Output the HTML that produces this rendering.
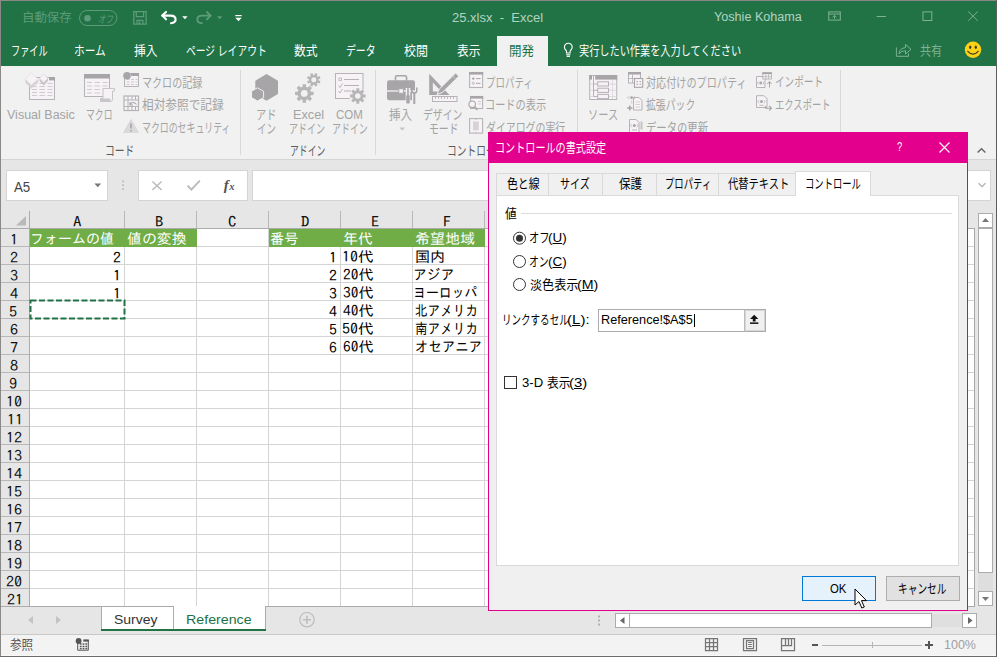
<!DOCTYPE html>
<html lang="ja"><head><meta charset="utf-8"><title>25.xlsx - Excel</title>
<style>
html,body{margin:0;padding:0}
body{width:997px;height:657px;overflow:hidden;background:#e6e6e6;position:relative;font-family:"Liberation Sans","Noto Sans CJK JP",sans-serif;}
.a{position:absolute;box-sizing:border-box}
.t{position:absolute;white-space:nowrap;line-height:20px;height:20px;display:block;transform-origin:0 50%}
svg{position:absolute;overflow:visible}
u{text-decoration:underline;text-underline-offset:1px}
</style></head><body>
<!-- window chrome -->
<div class="a" style="left:0;top:0;width:997px;height:657px;background:#8b8888"></div>
<div class="a" style="left:1px;top:1px;width:995px;height:65px;background:#217346"></div>
<div class="a" style="left:1px;top:66px;width:995px;height:93px;background:#f1f1f1"></div>
<div class="a" style="left:1px;top:159px;width:995px;height:1px;background:#d5d5d5"></div>
<div class="a" style="left:1px;top:160px;width:995px;height:474px;background:#e6e6e6"></div>
<div class="a" style="left:1px;top:634px;width:995px;height:1px;background:#c8c8c8"></div>
<div class="a" style="left:1px;top:635px;width:995px;height:20px;background:#f3f3f3"></div>
<div class="a" style="left:996px;top:0;width:1px;height:657px;background:#5c5c5c"></div>
<div class="a" style="left:1px;top:655px;width:995px;height:1px;background:#f8f8f8"></div>
<div class="a" style="left:0;top:656px;width:997px;height:1px;background:#6a6a6a"></div>
<!-- active ribbon tab -->
<div class="a" style="left:497px;top:36px;width:51px;height:30px;background:#f1f1f1"></div>
<svg style="left:0;top:0" width="997" height="165" viewBox="0 0 997 165">
<path d="M240.5 70V155" stroke="#d8d8d8" stroke-width="1"/>
<path d="M375.5 70V155" stroke="#d8d8d8" stroke-width="1"/>
<path d="M577.5 70V155" stroke="#d8d8d8" stroke-width="1"/>
<path d="M840.5 70V155" stroke="#d8d8d8" stroke-width="1"/>
<rect x="29.5" y="77.5" width="25" height="22" fill="#f6f2f6" stroke="#b5b3b5"/>
<rect x="49" y="77" width="6" height="3.4" fill="#a7a5a7"/>
<path d="M32 83.5H37M39.5 83.5H45M47.5 83.5H52.5" stroke="#cfcccf" stroke-width="1"/>
<path d="M32 86.5H37M39.5 86.5H45M47.5 86.5H52.5" stroke="#cfcccf" stroke-width="1"/>
<path d="M32 89.5H37M39.5 89.5H45M47.5 89.5H52.5" stroke="#cfcccf" stroke-width="1"/>
<path d="M32 92.5H37M39.5 92.5H45M47.5 92.5H52.5" stroke="#cfcccf" stroke-width="1"/>
<path d="M32 95.5H37M39.5 95.5H45M47.5 95.5H52.5" stroke="#cfcccf" stroke-width="1"/>
<path d="M25.2 79L31.3 84.9L38.2 79V82.6L31.3 88.8L25.2 82.6Z" fill="#d6d3d6"/>
<path d="M31.3 73.2L38.2 79L31.3 84.9L25.2 79Z" fill="#f6f2f6" stroke="#dedbde" stroke-width="0.6"/>
<path d="M39.5 78.2L43.7 82.4L47.9 78.2V81L43.7 85.5L39.5 81Z" fill="#c6c3c6"/>
<path d="M43.7 74L47.9 78.2L43.7 82.4L39.5 78.2Z" fill="#f6f2f6" stroke="#d2cfd2" stroke-width="0.6"/>
<rect x="84.5" y="74.5" width="25" height="22" fill="#f6f2f6" stroke="#b5b3b5"/>
<rect x="84" y="74" width="26" height="4.5" fill="#a7a5a7"/>
<path d="M87 82.5H92M94.5 82.5H100M102.5 82.5H107.5" stroke="#cfcccf" stroke-width="1"/>
<path d="M87 86H92M94.5 86H100M102.5 86H107.5" stroke="#cfcccf" stroke-width="1"/>
<path d="M87 89.5H92M94.5 89.5H100M102.5 89.5H107.5" stroke="#cfcccf" stroke-width="1"/>
<path d="M87 93H92M94.5 93H100M102.5 93H107.5" stroke="#cfcccf" stroke-width="1"/>
<path d="M103 88.5H114.5V91H112.5V99.5Q112.5 101.5 110.5 101.5H100.5V98.5H103Z" fill="#f6f2f6" stroke="#c2bfc2" stroke-width="0.9"/>
<path d="M100.5 98.5H110.5V101.5H100.5Z" fill="#c9c6c9"/>
<rect x="124.5" y="73.5" width="14" height="13" fill="#f6f2f6" stroke="#b5b3b5"/>
<rect x="131" y="73" width="8" height="3" fill="#a7a5a7"/>
<path d="M126.5 79.5H129.5M131 79.5H134M135.5 79.5H137.5" stroke="#cfcccf" stroke-width="1"/>
<path d="M126.5 82H129.5M131 82H134M135.5 82H137.5" stroke="#cfcccf" stroke-width="1"/>
<path d="M126.5 84.5H129.5M131 84.5H134M135.5 84.5H137.5" stroke="#cfcccf" stroke-width="1"/>
<circle cx="127" cy="75.8" r="3.8" fill="#a7a5a7"/>
<rect x="124" y="96" width="14.5" height="14.5" fill="#f6f2f6" stroke="#b5b3b5" stroke-width="1.2"/>
<path d="M128 96V110M124 100H138.5M124 106.5H138.5M132 96V100M135.5 96V100M132 106.5V110.5M135.5 106.5V110.5" stroke="#b5b3b5" stroke-width="1"/>
<path d="M130 104.5Q133 100.5 136.5 104.5M130 102V105H133" stroke="#a7a5a7" stroke-width="1.1" fill="none"/>
<path d="M131 119.5L138.5 132.5H123.5Z" fill="#dcd9dc" stroke="#d2cfd2" stroke-width="0.6"/>
<path d="M131 123.5V128.5M131 130V131.5" stroke="#a7a5a7" stroke-width="1.6"/>
<path d="M266.5 74L278 80.7V94L266.5 100.7L255.3 94V80.7Z" fill="#a7a5a7"/>
<path d="M257.5 87.8L263.6 91.3V97.6L257.5 101L251.5 97.6V91.3Z" fill="#a7a5a7" stroke="#f1f1f1" stroke-width="1"/>
<path d="M310.87 91.66 L313.55 91.71 L313.55 95.09 L310.87 95.14 L310.18 96.82 L312.03 98.74 L309.64 101.13 L307.72 99.28 L306.04 99.97 L305.99 102.65 L302.61 102.65 L302.56 99.97 L300.88 99.28 L298.96 101.13 L296.57 98.74 L298.42 96.82 L297.73 95.14 L295.05 95.09 L295.05 91.71 L297.73 91.66 L298.42 89.98 L296.57 88.06 L298.96 85.67 L300.88 87.52 L302.56 86.83 L302.61 84.15 L305.99 84.15 L306.04 86.83 L307.72 87.52 L309.64 85.67 L312.03 88.06 L310.18 89.98Z M307.70 93.40 A3.4 3.4 0 1 0 300.90 93.40 A3.4 3.4 0 1 0 307.70 93.40Z" fill="#b7b5b7" fill-rule="evenodd"/>
<path d="M318.66 80.44 L320.55 81.23 L319.61 83.53 L317.70 82.76 L316.78 83.69 L317.56 85.59 L315.27 86.54 L314.47 84.65 L313.16 84.66 L312.37 86.55 L310.07 85.61 L310.84 83.70 L309.91 82.78 L308.01 83.56 L307.06 81.27 L308.95 80.47 L308.94 79.16 L307.05 78.37 L307.99 76.07 L309.90 76.84 L310.82 75.91 L310.04 74.01 L312.33 73.06 L313.13 74.95 L314.44 74.94 L315.23 73.05 L317.53 73.99 L316.76 75.90 L317.69 76.82 L319.59 76.04 L320.54 78.33 L318.65 79.13Z M316.30 79.80 A2.5 2.5 0 1 0 311.30 79.80 A2.5 2.5 0 1 0 316.30 79.80Z" fill="#b7b5b7" fill-rule="evenodd"/>
<rect x="335.5" y="73.5" width="27.5" height="25" fill="#f6f2f6" stroke="#b5b3b5"/>
<rect x="339" y="78" width="2.5" height="2.5" fill="none" stroke="#b5b3b5" stroke-width="0.8"/>
<path d="M344 79.5H359M344 85.5H359M344 91H351" stroke="#b5b3b5" stroke-width="1"/>
<path d="M338.5 85.5L340 87.5L342.5 83.5M338.5 91L340 93L342.5 89" stroke="#b5b3b5" stroke-width="0.9" fill="none"/>
<circle cx="357.8" cy="96" r="8.6" fill="#f1f1f1"/>
<path d="M363.21 94.56 L365.57 94.58 L365.57 97.42 L363.21 97.44 L362.64 98.81 L364.30 100.49 L362.29 102.50 L360.61 100.84 L359.24 101.41 L359.22 103.77 L356.38 103.77 L356.36 101.41 L354.99 100.84 L353.31 102.50 L351.30 100.49 L352.96 98.81 L352.39 97.44 L350.03 97.42 L350.03 94.58 L352.39 94.56 L352.96 93.19 L351.30 91.51 L353.31 89.50 L354.99 91.16 L356.36 90.59 L356.38 88.23 L359.22 88.23 L359.24 90.59 L360.61 91.16 L362.29 89.50 L364.30 91.51 L362.64 93.19Z M360.60 96.00 A2.8 2.8 0 1 0 355.00 96.00 A2.8 2.8 0 1 0 360.60 96.00Z" fill="#b7b5b7" fill-rule="evenodd"/>
<path d="M395.5 80.5V77Q395.5 75.7 397 75.7H405Q406.5 75.7 406.5 77V80.5" fill="none" stroke="#a7a5a7" stroke-width="1.6"/>
<rect x="387" y="80.3" width="28" height="20" rx="2.2" fill="#a7a5a7"/>
<path d="M387 91H415" stroke="#f6f2f6" stroke-width="1.3"/>
<rect x="398.8" y="88.8" width="4.6" height="4.4" fill="#f6f2f6" stroke="#a7a5a7" stroke-width="0.8"/>
<path d="M408 88V103.5M414.3 91V104" stroke="#f1f1f1" stroke-width="4.6"/>
<path d="M408 88.3V96" stroke="#a7a5a7" stroke-width="1.6"/><rect x="406.3" y="95" width="3.4" height="8.6" rx="1.2" fill="#a7a5a7"/>
<path d="M414.3 92V104" stroke="#a7a5a7" stroke-width="2"/><path d="M411.8 87.5V90.5Q411.8 93 414.3 93Q416.8 93 416.8 90.5V87.5" stroke="#a7a5a7" stroke-width="1.5" fill="none"/>
<path d="M429.2 73.8V95H449.5ZM432.8 82.5V91.4H441.3Z" fill="#a7a5a7" fill-rule="evenodd"/>
<path d="M455.6 73L458.8 76.2L442.4 92.4L437 94.6L439.2 89.2Z" fill="#a7a5a7" stroke="#f1f1f1" stroke-width="1"/>
<path d="M452.6 76L455.8 79.2" stroke="#c9c7c9" stroke-width="1"/>
<rect x="432.5" y="96.5" width="24.5" height="5" fill="#f6f2f6" stroke="#b5b3b5"/>
<path d="M435.5 97V99M438.5 97V99M441.5 97V99M444.5 97V99M447.5 97V99M450.5 97V99M453.5 97V99" stroke="#b5b3b5" stroke-width="0.9"/>
<rect x="469.6" y="72.5" width="13" height="15" fill="#f6f2f6" stroke="#b5b3b5" stroke-width="1.1"/>
<rect x="469" y="72" width="14.2" height="2.6" fill="#a7a5a7"/>
<circle cx="473.3" cy="78.6" r="1.2" fill="#a7a5a7"/><circle cx="473.3" cy="83.3" r="1.1" fill="none" stroke="#a7a5a7" stroke-width="0.7"/>
<path d="M476 78.6H480.5M476 83.3H480.5" stroke="#a7a5a7" stroke-width="1"/>
<rect x="470.6" y="96.5" width="12" height="12" fill="#f6f2f6" stroke="#b5b3b5" stroke-width="1.1"/>
<rect x="470" y="96" width="13.2" height="2.6" fill="#a7a5a7"/>
<path d="M478 101.5H481M478 104H481" stroke="#cfcccf" stroke-width="1"/>
<circle cx="472.2" cy="104.3" r="3.3" fill="#f6f2f6" stroke="#a7a5a7" stroke-width="1.1"/><path d="M474.6 106.8L477.4 110" stroke="#a7a5a7" stroke-width="1.5"/>
<rect x="469.6" y="118.6" width="13" height="14.5" fill="#f6f2f6" stroke="#b5b3b5" stroke-width="1.1"/>
<rect x="473" y="121.5" width="5.8" height="8.8" fill="#d6d3d6"/><path d="M475.9 118.6V120M475.9 131.8V133" stroke="#b5b3b5" stroke-width="0.8"/>
<rect x="589.7" y="75.5" width="27" height="24" fill="#f6f2f6" stroke="#b5b3b5"/>
<rect x="589.2" y="75" width="2.8" height="4.6" fill="#a7a5a7"/><rect x="595.2" y="75" width="22" height="4.6" fill="#a7a5a7"/>
<path d="M593.5 75.5V96.5H597.5M593.5 84H597.5M593.5 90.3H597.5" stroke="#b5b3b5" stroke-width="1" fill="none"/>
<path d="M589.7 84H593M589.7 90.3H593M589.7 96.5H593M609 84H616.7M609 90.3H616.7M609 96.5H616.7M612.5 80V99" stroke="#d8d5d8" stroke-width="0.8" fill="none"/>
<rect x="597.7" y="81.8" width="10.8" height="4.2" fill="#f6f2f6" stroke="#b5b3b5" stroke-width="1"/>
<rect x="597.7" y="88.2" width="10.8" height="4.2" fill="#f6f2f6" stroke="#b5b3b5" stroke-width="1"/>
<rect x="597.7" y="94.4" width="10.8" height="4.2" fill="#f6f2f6" stroke="#b5b3b5" stroke-width="1"/>
<rect x="628.5" y="72.5" width="12" height="10.5" fill="#f6f2f6" stroke="#b5b3b5"/>
<rect x="628" y="72" width="13" height="2.5" fill="#a7a5a7"/>
<path d="M632.5 74.5V83M628.5 78.5H641" stroke="#b5b3b5" stroke-width="0.9"/>
<rect x="634.5" y="78.5" width="8.2" height="8.8" fill="#f6f2f6" stroke="#a7a5a7" stroke-width="1.1"/>
<path d="M636.5 81.6H638M639.5 81.6H641M636.5 84.4H638M639.5 84.4H641" stroke="#b5b3b5" stroke-width="1.1"/>
<path d="M633.5 97.5H639L642 100.5V110H633.5Z" fill="#f6f2f6" stroke="#b5b3b5" stroke-width="1"/>
<path d="M635.5 102H640M635.5 104.5H640M635.5 107H640" stroke="#cfcccf" stroke-width="0.9"/>
<circle cx="631.6" cy="97.6" r="1.3" fill="#a7a5a7"/><path d="M629.2 96.2L627.8 97.6L629.2 99M634 96.2L635.4 97.6L634 99" stroke="#b5b3b5" stroke-width="0.8" fill="none"/>
<path d="M631.7 100.5V104" stroke="#b5b3b5" stroke-width="0.8" stroke-dasharray="1 1"/>
<path d="M627.2 108H632.4M629.8 105.4V110.6" stroke="#a7a5a7" stroke-width="1.5"/>
<path d="M629.5 119.5H636L639 122.5V133H629.5Z" fill="#f6f2f6" stroke="#b5b3b5" stroke-width="1"/>
<circle cx="634.3" cy="125.6" r="1.5" fill="#a7a5a7"/><path d="M631.8 124L630.3 125.6L631.8 127.2M636.8 124L638.3 125.6L636.8 127.2" stroke="#b5b3b5" stroke-width="0.8" fill="none"/>
<path d="M632 130H637" stroke="#b5b3b5" stroke-width="0.9"/>
<rect x="640.5" y="121.5" width="2" height="8" fill="#c6c3c6"/>
<path d="M756.5 76.5H762.5L765 79V87.5H756.5Z" fill="#f6f2f6" stroke="#b5b3b5" stroke-width="1"/>
<circle cx="760.7" cy="83" r="1.4" fill="#a7a5a7"/><path d="M758.6 81.5L757.4 83L758.6 84.5M762.8 81.5L764 83L762.8 84.5" stroke="#b5b3b5" stroke-width="0.8" fill="none"/>
<rect x="762.8" y="72.8" width="8.6" height="6.2" fill="#f6f2f6" stroke="#b5b3b5" stroke-width="0.9"/><rect x="762.4" y="72.3" width="9.4" height="1.8" fill="#a7a5a7"/>
<path d="M765.8 74V79M768.6 74V79M762.8 76.6H771.4" stroke="#b5b3b5" stroke-width="0.7"/>
<path d="M769.5 87.5V81.8M767.3 84L769.5 81.6L771.7 84" stroke="#a7a5a7" stroke-width="1" fill="none"/>
<path d="M756.5 95.7H764L767 98.7V107.5H756.5Z" fill="#f6f2f6" stroke="#b5b3b5" stroke-width="1"/>
<circle cx="761.5" cy="101.6" r="1.5" fill="#a7a5a7"/><path d="M759.1 100L757.8 101.6L759.1 103.2M763.9 100L765.2 101.6L763.9 103.2" stroke="#b5b3b5" stroke-width="0.8" fill="none"/>
<path d="M759.3 105.3H763.7" stroke="#b5b3b5" stroke-width="0.9"/>
<path d="M765.5 106V108.3H771.3M769.2 106L771.5 108.3L769.2 110.6" stroke="#a7a5a7" stroke-width="1.1" fill="none"/>
<path d="M399.5 127.5H405L402.2 130.5Z" fill="#c4c2c4"/>
</svg>
<svg style="left:0;top:0" width="997" height="66" viewBox="0 0 997 66">
<rect x="79.5" y="10.5" width="37.5" height="15" rx="7.5" fill="none" stroke="#5d9b7a" stroke-width="1"/>
<circle cx="87.5" cy="18.2" r="3.3" fill="#5d9b7a"/>
<path d="M133.8 11.6H146.1V24.1H133.8Z" fill="none" stroke="#5d9b7a" stroke-width="1.3"/>
<path d="M136.3 11.6V16.6H143.6V11.6" fill="none" stroke="#5d9b7a" stroke-width="1.2"/>
<path d="M137 24.1V20.3H142.9V24.1" fill="none" stroke="#5d9b7a" stroke-width="1.2"/><rect x="138.6" y="21.5" width="1.6" height="2.6" fill="#5d9b7a"/>
<path d="M162.3 15.6H170.5Q175.6 15.6 175.6 19.6Q175.6 23 171 23.2" fill="none" stroke="#fff" stroke-width="2.1" stroke-linecap="round"/>
<path d="M166 11.9L162.3 15.6L166 19.3" fill="none" stroke="#fff" stroke-width="2.1" stroke-linecap="round" stroke-linejoin="round"/>
<path d="M182.2 16.2H187.6L184.9 19.2Z" fill="#fff"/>
<path d="M210.6 15.6H202.4Q197.3 15.6 197.3 19.6Q197.3 23 201.9 23.2" fill="none" stroke="#5d9b7a" stroke-width="1.9" stroke-linecap="round"/>
<path d="M206.9 11.9L210.6 15.6L206.9 19.3" fill="none" stroke="#5d9b7a" stroke-width="1.9" stroke-linecap="round" stroke-linejoin="round"/>
<path d="M217 16.2H222.4L219.7 19.2Z" fill="#5d9b7a"/>
<path d="M235.3 15.6H241.7" stroke="#fff" stroke-width="1.2"/><path d="M235.3 17.8H241.7L238.5 21.3Z" fill="#fff"/>
<rect x="828.7" y="11.9" width="11.6" height="8.2" fill="none" stroke="#7db295" stroke-width="1"/>
<path d="M828.7 14H840.3" stroke="#7db295" stroke-width="1"/><path d="M834.5 19V15.6M832.6 17.3L834.5 15.4L836.4 17.3" stroke="#7db295" stroke-width="0.9" fill="none"/>
<path d="M876.6 16.5H886" stroke="#7db295" stroke-width="1"/>
<rect x="923" y="11.9" width="8.8" height="8.6" fill="none" stroke="#7db295" stroke-width="1"/>
<path d="M968.3 11.6L977.7 20.8M977.7 11.6L968.3 20.8" stroke="#7db295" stroke-width="1"/>
<path d="M566.5 53V51.6Q566.5 50.8 565.7 50A3.9 3.9 0 1 1 570.9 50Q570.1 50.8 570.1 51.6V53Z" fill="none" stroke="#fff" stroke-width="1.1"/>
<path d="M566.2 54.7H570.4M566.7 56.4H569.9" stroke="#fff" stroke-width="1.1"/>
<path d="M896.4 47.5V56.3H908.5V53.5" fill="none" stroke="#7db295" stroke-width="1"/>
<path d="M899 53.8Q899.5 48 905.5 47.7V44.5L911 49.3L905.5 54V50.8Q901.5 50.6 899 53.8Z" fill="none" stroke="#7db295" stroke-width="1" stroke-linejoin="round"/>
<circle cx="973" cy="49.8" r="8.2" fill="#fcd116"/>
<ellipse cx="970.2" cy="47.2" rx="1.1" ry="1.7" fill="#3b3a1f"/><ellipse cx="975.8" cy="47.2" rx="1.1" ry="1.7" fill="#3b3a1f"/>
<path d="M967.8 51.3Q973 57 978.2 51.3" fill="none" stroke="#3b3a1f" stroke-width="1.2" stroke-linecap="round"/>
</svg>
<!-- formula bar -->
<div class="a" style="left:6px;top:170px;width:102px;height:31px;background:#fff;border:1px solid #d4d4d4"></div>
<div class="a" style="left:138px;top:170px;width:110px;height:31px;background:#fff;border:1px solid #d4d4d4"></div>
<div class="a" style="left:252px;top:170px;width:739px;height:31px;background:#fff;border:1px solid #d4d4d4"></div>
<svg style="left:0;top:140px" width="997" height="70" viewBox="0 140 997 70">
<path d="M94.4 183.6H101.2L97.8 187.2Z" fill="#777"/>
<rect x="122.3" y="180.6" width="1.6" height="1.6" fill="#b4b4b4"/><rect x="122.3" y="184.4" width="1.6" height="1.6" fill="#b4b4b4"/><rect x="122.3" y="188.2" width="1.6" height="1.6" fill="#b4b4b4"/>
<path d="M152.4 181.4L161.6 190M161.6 181.4L152.4 190" stroke="#b9b9b9" stroke-width="1.4" fill="none"/>
<path d="M187.6 185.6L191.4 189.6L199.8 180.6" stroke="#b9b9b9" stroke-width="1.9" fill="none"/>
<path d="M977.6 152.6L981.5 148.7L985.4 152.6" stroke="#666" stroke-width="1.4" fill="none"/>
<path d="M978.6 183.3L982 186.7L985.4 183.3" stroke="#b0b0b0" stroke-width="1.3" fill="none"/>
</svg>

<!-- grid -->
<div class="a" style="left:30px;top:228px;width:945px;height:378px;background:#fff"></div>
<div class="a" style="left:30px;top:246px;width:945px;height:1px;background:#d4d4d4"></div>
<div class="a" style="left:30px;top:264px;width:945px;height:1px;background:#d4d4d4"></div>
<div class="a" style="left:30px;top:282px;width:945px;height:1px;background:#d4d4d4"></div>
<div class="a" style="left:30px;top:300px;width:945px;height:1px;background:#d4d4d4"></div>
<div class="a" style="left:30px;top:318px;width:945px;height:1px;background:#d4d4d4"></div>
<div class="a" style="left:30px;top:336px;width:945px;height:1px;background:#d4d4d4"></div>
<div class="a" style="left:30px;top:354px;width:945px;height:1px;background:#d4d4d4"></div>
<div class="a" style="left:30px;top:372px;width:945px;height:1px;background:#d4d4d4"></div>
<div class="a" style="left:30px;top:390px;width:945px;height:1px;background:#d4d4d4"></div>
<div class="a" style="left:30px;top:408px;width:945px;height:1px;background:#d4d4d4"></div>
<div class="a" style="left:30px;top:426px;width:945px;height:1px;background:#d4d4d4"></div>
<div class="a" style="left:30px;top:444px;width:945px;height:1px;background:#d4d4d4"></div>
<div class="a" style="left:30px;top:462px;width:945px;height:1px;background:#d4d4d4"></div>
<div class="a" style="left:30px;top:480px;width:945px;height:1px;background:#d4d4d4"></div>
<div class="a" style="left:30px;top:498px;width:945px;height:1px;background:#d4d4d4"></div>
<div class="a" style="left:30px;top:516px;width:945px;height:1px;background:#d4d4d4"></div>
<div class="a" style="left:30px;top:534px;width:945px;height:1px;background:#d4d4d4"></div>
<div class="a" style="left:30px;top:552px;width:945px;height:1px;background:#d4d4d4"></div>
<div class="a" style="left:30px;top:570px;width:945px;height:1px;background:#d4d4d4"></div>
<div class="a" style="left:30px;top:588px;width:945px;height:1px;background:#d4d4d4"></div>
<div class="a" style="left:30px;top:606px;width:945px;height:1px;background:#d4d4d4"></div>
<div class="a" style="left:124px;top:229px;width:1px;height:377px;background:#d4d4d4"></div>
<div class="a" style="left:196px;top:229px;width:1px;height:377px;background:#d4d4d4"></div>
<div class="a" style="left:268px;top:229px;width:1px;height:377px;background:#d4d4d4"></div>
<div class="a" style="left:340px;top:229px;width:1px;height:377px;background:#d4d4d4"></div>
<div class="a" style="left:412px;top:229px;width:1px;height:377px;background:#d4d4d4"></div>
<div class="a" style="left:484px;top:229px;width:1px;height:377px;background:#d4d4d4"></div>
<div class="a" style="left:556px;top:229px;width:1px;height:377px;background:#d4d4d4"></div>
<div class="a" style="left:628px;top:229px;width:1px;height:377px;background:#d4d4d4"></div>
<div class="a" style="left:700px;top:229px;width:1px;height:377px;background:#d4d4d4"></div>
<div class="a" style="left:772px;top:229px;width:1px;height:377px;background:#d4d4d4"></div>
<div class="a" style="left:844px;top:229px;width:1px;height:377px;background:#d4d4d4"></div>
<div class="a" style="left:916px;top:229px;width:1px;height:377px;background:#d4d4d4"></div>
<div class="a" style="left:30px;top:229px;width:167px;height:18px;background:#70ad47"></div>
<div class="a" style="left:269px;top:229px;width:216px;height:18px;background:#70ad47"></div>
<div class="a" style="left:1px;top:228px;width:974px;height:1px;background:#ababab"></div>
<div class="a" style="left:29px;top:211px;width:1px;height:395px;background:#ababab"></div>
<div class="a" style="left:974px;top:228px;width:1px;height:378px;background:#a6a6a6"></div>
<div class="a" style="left:124px;top:211px;width:1px;height:17px;background:#b8b8b8"></div>
<div class="a" style="left:196px;top:211px;width:1px;height:17px;background:#b8b8b8"></div>
<div class="a" style="left:268px;top:211px;width:1px;height:17px;background:#b8b8b8"></div>
<div class="a" style="left:340px;top:211px;width:1px;height:17px;background:#b8b8b8"></div>
<div class="a" style="left:412px;top:211px;width:1px;height:17px;background:#b8b8b8"></div>
<div class="a" style="left:484px;top:211px;width:1px;height:17px;background:#b8b8b8"></div>
<div class="a" style="left:556px;top:211px;width:1px;height:17px;background:#b8b8b8"></div>
<div class="a" style="left:628px;top:211px;width:1px;height:17px;background:#b8b8b8"></div>
<div class="a" style="left:700px;top:211px;width:1px;height:17px;background:#b8b8b8"></div>
<div class="a" style="left:772px;top:211px;width:1px;height:17px;background:#b8b8b8"></div>
<div class="a" style="left:844px;top:211px;width:1px;height:17px;background:#b8b8b8"></div>
<div class="a" style="left:916px;top:211px;width:1px;height:17px;background:#b8b8b8"></div>
<div class="a" style="left:1px;top:246px;width:28px;height:1px;background:#b8b8b8"></div>
<div class="a" style="left:1px;top:264px;width:28px;height:1px;background:#b8b8b8"></div>
<div class="a" style="left:1px;top:282px;width:28px;height:1px;background:#b8b8b8"></div>
<div class="a" style="left:1px;top:300px;width:28px;height:1px;background:#b8b8b8"></div>
<div class="a" style="left:1px;top:318px;width:28px;height:1px;background:#b8b8b8"></div>
<div class="a" style="left:1px;top:336px;width:28px;height:1px;background:#b8b8b8"></div>
<div class="a" style="left:1px;top:354px;width:28px;height:1px;background:#b8b8b8"></div>
<div class="a" style="left:1px;top:372px;width:28px;height:1px;background:#b8b8b8"></div>
<div class="a" style="left:1px;top:390px;width:28px;height:1px;background:#b8b8b8"></div>
<div class="a" style="left:1px;top:408px;width:28px;height:1px;background:#b8b8b8"></div>
<div class="a" style="left:1px;top:426px;width:28px;height:1px;background:#b8b8b8"></div>
<div class="a" style="left:1px;top:444px;width:28px;height:1px;background:#b8b8b8"></div>
<div class="a" style="left:1px;top:462px;width:28px;height:1px;background:#b8b8b8"></div>
<div class="a" style="left:1px;top:480px;width:28px;height:1px;background:#b8b8b8"></div>
<div class="a" style="left:1px;top:498px;width:28px;height:1px;background:#b8b8b8"></div>
<div class="a" style="left:1px;top:516px;width:28px;height:1px;background:#b8b8b8"></div>
<div class="a" style="left:1px;top:534px;width:28px;height:1px;background:#b8b8b8"></div>
<div class="a" style="left:1px;top:552px;width:28px;height:1px;background:#b8b8b8"></div>
<div class="a" style="left:1px;top:570px;width:28px;height:1px;background:#b8b8b8"></div>
<div class="a" style="left:1px;top:588px;width:28px;height:1px;background:#b8b8b8"></div>
<div class="a" style="left:1px;top:606px;width:28px;height:1px;background:#b8b8b8"></div>
<svg style="left:16px;top:215.5px" width="10" height="9.5"><path d="M10 0V9.5H0Z" fill="#b9b9b9"/></svg>
<svg style="left:29px;top:299px" width="97" height="21"><rect x="1.5" y="1.5" width="94" height="18" fill="none" stroke="#217346" stroke-width="2" stroke-dasharray="6 2.5"/></svg>
<div class="a" style="left:978px;top:213px;width:15px;height:15px;background:#fff;border:1px solid #ababab"></div>
<svg style="left:982px;top:218px" width="7" height="4"><path d="M0 4L3.5 0L7 4Z" fill="#777"/></svg>
<div class="a" style="left:978px;top:228px;width:15px;height:345px;background:#fff;border:1px solid #ababab"></div>
<div class="a" style="left:978px;top:573px;width:15px;height:18px;background:#dedede"></div>
<div class="a" style="left:978px;top:591px;width:15px;height:15px;background:#fff;border:1px solid #ababab"></div>
<svg style="left:982px;top:597px" width="7" height="4"><path d="M0 0L3.5 4L7 0Z" fill="#777"/></svg>
<!-- sheet tabs / status -->
<div class="a" style="left:1px;top:606px;width:974px;height:1px;background:#ababab"></div>
<div class="a" style="left:101px;top:606px;width:165px;height:25px;background:#fff;border-left:1px solid #ababab;border-right:1px solid #ababab"></div>
<div class="a" style="left:101px;top:606px;width:73px;height:1px;background:#ababab"></div>
<div class="a" style="left:173px;top:606px;width:1px;height:24px;background:#ababab"></div>
<div class="a" style="left:174px;top:606px;width:91px;height:1px;background:#fff"></div>
<div class="a" style="left:101px;top:629px;width:165px;height:2px;background:#217346"></div>
<svg style="left:26px;top:614px" width="40" height="12"><path d="M7 2V10L2 6Z" fill="#c3c3c3"/><path d="M30 2V10L35 6Z" fill="#c3c3c3"/></svg>
<svg style="left:298px;top:611px" width="18" height="18"><circle cx="9" cy="8.7" r="7.2" fill="none" stroke="#bdbdbd" stroke-width="1.2"/><path d="M5 8.7H13M9 4.7V12.7" stroke="#bdbdbd" stroke-width="1.6"/></svg>
<!-- hscroll -->
<svg style="left:597px;top:615px" width="4" height="12"><rect x="1" y="0.5" width="2" height="2" fill="#b0b0b0"/><rect x="1" y="4.5" width="2" height="2" fill="#b0b0b0"/><rect x="1" y="8.5" width="2" height="2" fill="#b0b0b0"/></svg>
<div class="a" style="left:615px;top:613px;width:15px;height:15px;background:#fff;border:1px solid #ababab"></div>
<svg style="left:620px;top:617px" width="5" height="8"><path d="M4.5 0V7L0 3.5Z" fill="#666"/></svg>
<div class="a" style="left:629px;top:613px;width:303px;height:15px;background:#fff;border:1px solid #ababab"></div>
<div class="a" style="left:932px;top:614px;width:30px;height:13px;background:#dfdfdf;background-image:radial-gradient(#d2d2d2 0.6px,transparent 0.7px);background-size:2px 2px"></div>
<div class="a" style="left:962px;top:613px;width:15px;height:15px;background:#fff;border:1px solid #ababab"></div>
<svg style="left:968px;top:617px" width="5" height="8"><path d="M0 0V7L4.5 3.5Z" fill="#666"/></svg>
<!-- status bar icons -->
<svg style="left:0;top:630px" width="110" height="27" viewBox="0 630 110 27"><path d="M77.7 643V650.2H88.3V640" fill="none" stroke="#555" stroke-width="1"/><rect x="83.3" y="639.4" width="5.5" height="2.2" fill="#555"/><circle cx="78.6" cy="641" r="2.9" fill="#555"/><path d="M79.8 644H81.6M82.6 644H84.4M85.4 644H87.2M79.8 646.3H81.6M82.6 646.3H84.4M85.4 646.3H87.2M79.8 648.5H81.6M82.6 648.5H84.4M85.4 648.5H87.2" stroke="#555" stroke-width="1.3"/></svg>
<svg style="left:695px;top:632px" width="140" height="25" viewBox="695 632 140 25"><g fill="none" stroke="#767676" stroke-width="1.25">
<path d="M705.5 638.5H717.5V650.5H705.5ZM705.5 642.5H717.5M705.5 646.5H717.5M709.5 638.5V650.5M713.5 638.5V650.5"/>
<path d="M743.5 638.5H756.5V650.5H743.5ZM746.5 640.5H753.5V648.5H746.5Z"/><path d="M748.2 642.5H751.8M748.2 644.5H751.8M748.2 646.5H751.8" stroke-width="1"/>
<path d="M781.5 638.5H794.5V650.5H781.5ZM785.5 638.5V645.5M788.5 638.5V645.5M781.5 645.5H791.5V638.5"/>
</g></svg>
<!-- zoom slider -->
<div class="a" style="left:812px;top:644px;width:6px;height:2px;background:#555"></div>
<div class="a" style="left:822px;top:645px;width:100px;height:1px;background:#b5b5b5"></div>
<div class="a" style="left:872px;top:642px;width:1px;height:6px;background:#b5b5b5"></div>
<div class="a" style="left:925px;top:644px;width:8px;height:2px;background:#555"></div>
<div class="a" style="left:928px;top:641px;width:2px;height:8px;background:#555"></div>

<span class="t" style="left:22.3px;top:8.0px;color:#5d9b7a;font-size:12.5px;transform:scaleX(0.994);">自動保存</span>
<span class="t" style="left:97.6px;top:8.5px;color:#5d9b7a;font-size:10.5px;font-style:italic;transform:scaleX(0.725);">オフ</span>
<span class="t" style="left:451.5px;top:8.0px;color:#b2d2c0;font-size:12.5px;transform:scaleX(1.040);">25.xlsx&nbsp; -&nbsp; Excel</span>
<span class="t" style="left:713.6px;top:7.0px;color:#b2d2c0;font-size:12.5px;transform:scaleX(1.009);">Yoshie Kohama</span>
<span class="t" style="left:11.1px;top:41.0px;color:#ffffff;font-size:13px;transform:scaleX(0.704);">ファイル</span>
<span class="t" style="left:73.7px;top:41.0px;color:#ffffff;font-size:13px;transform:scaleX(0.819);">ホーム</span>
<span class="t" style="left:134.0px;top:41.0px;color:#ffffff;font-size:13px;transform:scaleX(0.904);">挿入</span>
<span class="t" style="left:186.0px;top:41.0px;color:#ffffff;font-size:13px;transform:scaleX(0.752);">ページ レイアウト</span>
<span class="t" style="left:294.4px;top:41.0px;color:#ffffff;font-size:13px;transform:scaleX(0.908);">数式</span>
<span class="t" style="left:346.2px;top:41.0px;color:#ffffff;font-size:13px;transform:scaleX(0.757);">データ</span>
<span class="t" style="left:404.0px;top:41.0px;color:#ffffff;font-size:13px;transform:scaleX(0.920);">校閲</span>
<span class="t" style="left:457.0px;top:41.0px;color:#ffffff;font-size:13px;transform:scaleX(0.900);">表示</span>
<span class="t" style="left:509.0px;top:41.0px;color:#217346;font-size:13px;transform:scaleX(0.960);">開発</span>
<span class="t" style="left:578.9px;top:41.0px;color:#ffffff;font-size:13px;transform:scaleX(0.782);">実行したい作業を入力してください</span>
<span class="t" style="left:919.8px;top:41.0px;color:#7fb294;font-size:13px;transform:scaleX(0.854);">共有</span>
<span class="t" style="left:7.0px;top:104.7px;color:#a3a3a3;font-size:12.5px;">Visual Basic</span>
<span class="t" style="left:85.8px;top:104.7px;color:#a3a3a3;font-size:13px;transform:scaleX(0.678);">マクロ</span>
<span class="t" style="left:141.6px;top:72.5px;color:#a3a3a3;font-size:13px;transform:scaleX(0.773);">マクロの記録</span>
<span class="t" style="left:142.4px;top:95.1px;color:#a3a3a3;font-size:13px;transform:scaleX(0.897);">相対参照で記録</span>
<span class="t" style="left:141.7px;top:117.6px;color:#a3a3a3;font-size:13px;transform:scaleX(0.685);">マクロのセキュリティ</span>
<span class="t" style="left:105.1px;top:141.3px;color:#5c5c5c;font-size:13px;transform:scaleX(0.754);">コード</span>
<span class="t" style="left:256.2px;top:104.8px;color:#a3a3a3;font-size:13px;transform:scaleX(0.791);">アド</span>
<span class="t" style="left:256.8px;top:119.0px;color:#a3a3a3;font-size:13px;transform:scaleX(0.729);">イン</span>
<span class="t" style="left:292.5px;top:104.8px;color:#a3a3a3;font-size:12.5px;transform:scaleX(1.017);">Excel</span>
<span class="t" style="left:289.3px;top:119.0px;color:#a3a3a3;font-size:13px;transform:scaleX(0.694);">アドイン</span>
<span class="t" style="left:336.0px;top:104.8px;color:#a3a3a3;font-size:12.5px;transform:scaleX(0.917);">COM</span>
<span class="t" style="left:331.9px;top:119.0px;color:#a3a3a3;font-size:13px;transform:scaleX(0.688);">アドイン</span>
<span class="t" style="left:290.1px;top:141.3px;color:#5c5c5c;font-size:13px;transform:scaleX(0.678);">アドイン</span>
<span class="t" style="left:389.0px;top:104.8px;color:#a3a3a3;font-size:13px;transform:scaleX(0.885);">挿入</span>
<span class="t" style="left:423.0px;top:104.8px;color:#a3a3a3;font-size:13px;transform:scaleX(0.756);">デザイン</span>
<span class="t" style="left:429.0px;top:119.0px;color:#a3a3a3;font-size:13px;transform:scaleX(0.756);">モード</span>
<span class="t" style="left:486.3px;top:72.5px;color:#a3a3a3;font-size:13px;transform:scaleX(0.728);">プロパティ</span>
<span class="t" style="left:485.4px;top:95.1px;color:#a3a3a3;font-size:13px;transform:scaleX(0.783);">コードの表示</span>
<span class="t" style="left:486.2px;top:117.6px;color:#a3a3a3;font-size:13px;transform:scaleX(0.762);">ダイアログの実行</span>
<span class="t" style="left:447.1px;top:141.3px;color:#5c5c5c;font-size:13px;transform:scaleX(0.747);">コントロール</span>
<span class="t" style="left:587.9px;top:104.8px;color:#a3a3a3;font-size:13px;transform:scaleX(0.786);">ソース</span>
<span class="t" style="left:646.4px;top:72.5px;color:#a3a3a3;font-size:13px;transform:scaleX(0.778);">対応付けのプロパティ</span>
<span class="t" style="left:646.4px;top:95.1px;color:#a3a3a3;font-size:13px;transform:scaleX(0.759);">拡張パック</span>
<span class="t" style="left:645.6px;top:117.6px;color:#a3a3a3;font-size:13px;transform:scaleX(0.795);">データの更新</span>
<span class="t" style="left:774.6px;top:72.0px;color:#a3a3a3;font-size:13px;transform:scaleX(0.739);">インポート</span>
<span class="t" style="left:774.6px;top:94.7px;color:#a3a3a3;font-size:13px;transform:scaleX(0.716);">エクスポート</span>
<span class="t" style="left:14.3px;top:177.4px;color:#444;font-size:14.5px;transform:scaleX(0.917);">A5</span>
<span class="t" style="left:223.7px;top:175.2px;color:#555;font-size:15px;font-family:'Liberation Serif',serif;font-weight:700;"><i>f</i></span>
<span class="t" style="left:229.3px;top:177.2px;color:#555;font-size:10.5px;font-family:'Liberation Serif',serif;font-weight:700;"><i>x</i></span>
<span class="t" style="left:73.0px;top:212.2px;color:#111;font-size:14.5px;font-family:'IPAGothic','Liberation Sans',sans-serif;transform:scaleX(1.170);">A</span>
<span class="t" style="left:155.4px;top:211.7px;color:#111;font-size:14.5px;font-family:'IPAGothic','Liberation Sans',sans-serif;transform:scaleX(1.170);">B</span>
<span class="t" style="left:228.0px;top:211.7px;color:#111;font-size:14.5px;font-family:'IPAGothic','Liberation Sans',sans-serif;transform:scaleX(1.170);">C</span>
<span class="t" style="left:300.5px;top:211.7px;color:#111;font-size:14.5px;font-family:'IPAGothic','Liberation Sans',sans-serif;transform:scaleX(1.170);">D</span>
<span class="t" style="left:371.4px;top:211.7px;color:#111;font-size:14.5px;font-family:'IPAGothic','Liberation Sans',sans-serif;transform:scaleX(1.170);">E</span>
<span class="t" style="left:443.4px;top:212.2px;color:#111;font-size:14.5px;font-family:'IPAGothic','Liberation Sans',sans-serif;transform:scaleX(1.170);">F</span>
<span class="t" style="left:9.6px;top:230.3px;color:#111;font-size:14.5px;font-family:'IPAGothic','Liberation Sans',sans-serif;transform:scaleX(1.120);">1</span>
<span class="t" style="left:10.0px;top:247.8px;color:#111;font-size:14.5px;font-family:'IPAGothic','Liberation Sans',sans-serif;transform:scaleX(1.120);">2</span>
<span class="t" style="left:10.0px;top:265.8px;color:#111;font-size:14.5px;font-family:'IPAGothic','Liberation Sans',sans-serif;transform:scaleX(1.120);">3</span>
<span class="t" style="left:10.0px;top:284.3px;color:#111;font-size:14.5px;font-family:'IPAGothic','Liberation Sans',sans-serif;transform:scaleX(1.120);">4</span>
<span class="t" style="left:9.4px;top:301.8px;color:#111;font-size:14.5px;font-family:'IPAGothic','Liberation Sans',sans-serif;transform:scaleX(1.120);">5</span>
<span class="t" style="left:10.0px;top:319.8px;color:#111;font-size:14.5px;font-family:'IPAGothic','Liberation Sans',sans-serif;transform:scaleX(1.120);">6</span>
<span class="t" style="left:10.0px;top:338.3px;color:#111;font-size:14.5px;font-family:'IPAGothic','Liberation Sans',sans-serif;transform:scaleX(1.120);">7</span>
<span class="t" style="left:10.0px;top:355.8px;color:#111;font-size:14.5px;font-family:'IPAGothic','Liberation Sans',sans-serif;transform:scaleX(1.120);">8</span>
<span class="t" style="left:9.4px;top:373.8px;color:#111;font-size:14.5px;font-family:'IPAGothic','Liberation Sans',sans-serif;transform:scaleX(1.120);">9</span>
<span class="t" style="left:5.5px;top:391.8px;color:#111;font-size:14.5px;font-family:'IPAGothic','Liberation Sans',sans-serif;transform:scaleX(1.120);">10</span>
<span class="t" style="left:6.6px;top:410.3px;color:#111;font-size:14.5px;font-family:'IPAGothic','Liberation Sans',sans-serif;transform:scaleX(1.120);">11</span>
<span class="t" style="left:5.5px;top:427.8px;color:#111;font-size:14.5px;font-family:'IPAGothic','Liberation Sans',sans-serif;transform:scaleX(1.120);">12</span>
<span class="t" style="left:5.5px;top:445.8px;color:#111;font-size:14.5px;font-family:'IPAGothic','Liberation Sans',sans-serif;transform:scaleX(1.120);">13</span>
<span class="t" style="left:5.5px;top:464.3px;color:#111;font-size:14.5px;font-family:'IPAGothic','Liberation Sans',sans-serif;transform:scaleX(1.120);">14</span>
<span class="t" style="left:5.5px;top:481.8px;color:#111;font-size:14.5px;font-family:'IPAGothic','Liberation Sans',sans-serif;transform:scaleX(1.120);">15</span>
<span class="t" style="left:5.5px;top:499.8px;color:#111;font-size:14.5px;font-family:'IPAGothic','Liberation Sans',sans-serif;transform:scaleX(1.120);">16</span>
<span class="t" style="left:5.5px;top:518.3px;color:#111;font-size:14.5px;font-family:'IPAGothic','Liberation Sans',sans-serif;transform:scaleX(1.120);">17</span>
<span class="t" style="left:5.5px;top:535.8px;color:#111;font-size:14.5px;font-family:'IPAGothic','Liberation Sans',sans-serif;transform:scaleX(1.120);">18</span>
<span class="t" style="left:5.5px;top:553.8px;color:#111;font-size:14.5px;font-family:'IPAGothic','Liberation Sans',sans-serif;transform:scaleX(1.120);">19</span>
<span class="t" style="left:6.1px;top:571.8px;color:#111;font-size:14.5px;font-family:'IPAGothic','Liberation Sans',sans-serif;transform:scaleX(1.120);">20</span>
<span class="t" style="left:7.2px;top:589.8px;color:#111;font-size:14.5px;font-family:'IPAGothic','Liberation Sans',sans-serif;transform:scaleX(1.120);">21</span>
<span class="t" style="left:30.3px;top:229.0px;color:#ffffff;font-size:14.67px;font-family:'IPAGothic','Liberation Sans',sans-serif;transform:scaleX(0.954);">フォームの値</span>
<span class="t" style="left:127.2px;top:229.0px;color:#ffffff;font-size:14.67px;font-family:'IPAGothic','Liberation Sans',sans-serif;transform:scaleX(1.018);">値の変換</span>
<span class="t" style="left:270.3px;top:229.0px;color:#ffffff;font-size:14.67px;font-family:'IPAGothic','Liberation Sans',sans-serif;transform:scaleX(0.964);">番号</span>
<span class="t" style="left:342.9px;top:229.0px;color:#ffffff;font-size:14.67px;font-family:'IPAGothic','Liberation Sans',sans-serif;transform:scaleX(1.021);">年代</span>
<span class="t" style="left:414.7px;top:229.0px;color:#ffffff;font-size:14.67px;font-family:'IPAGothic','Liberation Sans',sans-serif;transform:scaleX(1.026);">希望地域</span>
<span class="t" style="left:113.1px;top:247.9px;color:#000;font-size:14.67px;font-family:'IPAGothic','Liberation Sans',sans-serif;transform:scaleX(1.080);">2</span>
<span class="t" style="left:113.2px;top:266.4px;color:#000;font-size:14.67px;font-family:'IPAGothic','Liberation Sans',sans-serif;transform:scaleX(1.080);">1</span>
<span class="t" style="left:113.2px;top:284.4px;color:#000;font-size:14.67px;font-family:'IPAGothic','Liberation Sans',sans-serif;transform:scaleX(1.080);">1</span>
<span class="t" style="left:328.8px;top:248.4px;color:#000;font-size:14.67px;font-family:'IPAGothic','Liberation Sans',sans-serif;transform:scaleX(1.080);">1</span>
<span class="t" style="left:341.6px;top:247.0px;color:#000;font-size:14.67px;font-family:'IPAGothic','Liberation Sans',sans-serif;transform:scaleX(1.089);">10代</span>
<span class="t" style="left:328.8px;top:265.9px;color:#000;font-size:14.67px;font-family:'IPAGothic','Liberation Sans',sans-serif;transform:scaleX(1.080);">2</span>
<span class="t" style="left:342.7px;top:265.0px;color:#000;font-size:14.67px;font-family:'IPAGothic','Liberation Sans',sans-serif;transform:scaleX(1.052);">20代</span>
<span class="t" style="left:328.8px;top:283.9px;color:#000;font-size:14.67px;font-family:'IPAGothic','Liberation Sans',sans-serif;transform:scaleX(1.080);">3</span>
<span class="t" style="left:342.7px;top:283.0px;color:#000;font-size:14.67px;font-family:'IPAGothic','Liberation Sans',sans-serif;transform:scaleX(1.052);">30代</span>
<span class="t" style="left:328.8px;top:302.4px;color:#000;font-size:14.67px;font-family:'IPAGothic','Liberation Sans',sans-serif;transform:scaleX(1.080);">4</span>
<span class="t" style="left:342.7px;top:301.0px;color:#000;font-size:14.67px;font-family:'IPAGothic','Liberation Sans',sans-serif;transform:scaleX(1.052);">40代</span>
<span class="t" style="left:328.8px;top:319.9px;color:#000;font-size:14.67px;font-family:'IPAGothic','Liberation Sans',sans-serif;transform:scaleX(1.080);">5</span>
<span class="t" style="left:341.6px;top:319.0px;color:#000;font-size:14.67px;font-family:'IPAGothic','Liberation Sans',sans-serif;transform:scaleX(1.089);">50代</span>
<span class="t" style="left:328.8px;top:337.9px;color:#000;font-size:14.67px;font-family:'IPAGothic','Liberation Sans',sans-serif;transform:scaleX(1.080);">6</span>
<span class="t" style="left:342.7px;top:337.0px;color:#000;font-size:14.67px;font-family:'IPAGothic','Liberation Sans',sans-serif;transform:scaleX(1.052);">60代</span>
<span class="t" style="left:414.7px;top:247.2px;color:#000;font-size:14.67px;font-family:'IPAGothic','Liberation Sans',sans-serif;transform:scaleX(1.030);">国内</span>
<span class="t" style="left:412.6px;top:265.2px;color:#000;font-size:14.67px;font-family:'IPAGothic','Liberation Sans',sans-serif;transform:scaleX(0.939);">アジア</span>
<span class="t" style="left:412.7px;top:283.2px;color:#000;font-size:14.67px;font-family:'IPAGothic','Liberation Sans',sans-serif;transform:scaleX(0.880);">ヨーロッパ</span>
<span class="t" style="left:414.8px;top:301.2px;color:#000;font-size:14.67px;font-family:'IPAGothic','Liberation Sans',sans-serif;transform:scaleX(0.860);">北アメリカ</span>
<span class="t" style="left:414.8px;top:319.2px;color:#000;font-size:14.67px;font-family:'IPAGothic','Liberation Sans',sans-serif;transform:scaleX(0.860);">南アメリカ</span>
<span class="t" style="left:414.8px;top:337.2px;color:#000;font-size:14.67px;font-family:'IPAGothic','Liberation Sans',sans-serif;transform:scaleX(0.914);">オセアニア</span>
<!-- dialog -->
<div class="a" style="left:488px;top:132px;width:480px;height:479px;background:#f0f0f0;border:1px solid #e3008c"></div>
<div class="a" style="left:488px;top:132px;width:480px;height:31px;background:#e3008c"></div>
<svg style="left:939px;top:142px" width="11" height="11"><path d="M0.5 0.5L10.5 10.5M10.5 0.5L0.5 10.5" stroke="#fff" stroke-width="1.2" fill="none"/></svg>
<!-- tab strip -->
<div class="a" style="left:496px;top:173px;width:300px;height:23px;border:1px solid #d9d9d9;border-bottom:none;background:#f0f0f0"></div>
<div class="a" style="left:548px;top:173px;width:1px;height:22px;background:#d9d9d9"></div>
<div class="a" style="left:602px;top:173px;width:1px;height:22px;background:#d9d9d9"></div>
<div class="a" style="left:656px;top:173px;width:1px;height:22px;background:#d9d9d9"></div>
<div class="a" style="left:718px;top:173px;width:1px;height:22px;background:#d9d9d9"></div>
<!-- panel -->
<div class="a" style="left:496px;top:195px;width:463px;height:371px;background:#fff;border:1px solid #d9d9d9"></div>
<div class="a" style="left:795px;top:171px;width:76px;height:25px;background:#fff;border:1px solid #d9d9d9;border-bottom:none"></div>
<!-- group line -->
<div class="a" style="left:521px;top:213px;width:431px;height:1px;background:#dcdcdc"></div>
<!-- radios -->
<svg style="left:512px;top:231px" width="15" height="61"><circle cx="7.5" cy="7.2" r="6" fill="#fff" stroke="#333" stroke-width="1"/><circle cx="7.5" cy="7.2" r="3.5" fill="#333"/><circle cx="7.5" cy="30.5" r="6" fill="#fff" stroke="#333" stroke-width="1"/><circle cx="7.5" cy="53.5" r="6" fill="#fff" stroke="#333" stroke-width="1"/></svg>
<!-- ref edit -->
<div class="a" style="left:598px;top:309px;width:168px;height:23px;background:#fff;border:1px solid #ababab"></div>
<div class="a" style="left:744px;top:309px;width:22px;height:23px;background:#d6d6d6;border:1px solid #ababab;border-left:1px solid #bcbcbc"></div>
<div class="a" style="left:746px;top:311px;width:18px;height:19px;background:#f0f0f0"></div>
<svg style="left:749px;top:314px" width="11" height="11"><path d="M5.2 0.8L9.4 5H6.6V7.4H3.8V5H1Z" fill="#111"/><rect x="1" y="8.4" width="8.4" height="1.5" fill="#111"/></svg>
<div class="a" style="left:694px;top:314px;width:1px;height:13px;background:#000"></div>
<!-- checkbox -->
<div class="a" style="left:504px;top:376px;width:13px;height:13px;background:#fff;border:1px solid #333"></div>
<!-- buttons -->
<div class="a" style="left:802px;top:576px;width:74px;height:25px;background:#e5f1fb;border:1px solid #0078d7"></div>
<div class="a" style="left:886px;top:576px;width:74px;height:25px;background:#e1e1e1;border:1px solid #adadad"></div>

<span class="t" style="left:495.4px;top:138.2px;color:#ffffff;font-size:13px;transform:scaleX(0.777);">コントロールの書式設定</span>
<span class="t" style="left:896.7px;top:137.4px;color:#ffffff;font-size:12.5px;transform:scaleX(0.757);">?</span>
<span class="t" style="left:506.6px;top:174.2px;color:#000;font-size:13px;transform:scaleX(0.836);">色と線</span>
<span class="t" style="left:559.8px;top:174.2px;color:#000;font-size:13px;transform:scaleX(0.776);">サイズ</span>
<span class="t" style="left:618.5px;top:174.2px;color:#000;font-size:13px;transform:scaleX(0.885);">保護</span>
<span class="t" style="left:665.3px;top:174.2px;color:#000;font-size:13px;transform:scaleX(0.720);">プロパティ</span>
<span class="t" style="left:728.0px;top:174.2px;color:#000;font-size:13px;transform:scaleX(0.789);">代替テキスト</span>
<span class="t" style="left:804.6px;top:174.2px;color:#000;font-size:13px;transform:scaleX(0.717);">コントロール</span>
<span class="t" style="left:504.6px;top:204.0px;color:#000;font-size:13px;transform:scaleX(0.900);">値</span>
<span class="t" style="left:529.2px;top:228.2px;color:#000;font-size:13px;transform:scaleX(0.791);">オフ</span>
<span class="t" style="left:547.5px;top:228.2px;color:#000;font-size:12.5px;transform:scaleX(1.075);">(<u>U</u>)</span>
<span class="t" style="left:529.2px;top:251.7px;color:#000;font-size:13px;transform:scaleX(0.758);">オン</span>
<span class="t" style="left:547.5px;top:251.7px;color:#000;font-size:12.5px;transform:scaleX(1.075);">(<u>C</u>)</span>
<span class="t" style="left:530.0px;top:274.5px;color:#000;font-size:13px;transform:scaleX(0.929);">淡色表示</span>
<span class="t" style="left:577.4px;top:274.5px;color:#000;font-size:12.5px;transform:scaleX(1.135);">(<u>M</u>)</span>
<span class="t" style="left:501.8px;top:310.0px;color:#000;font-size:13px;transform:scaleX(0.733);">リンクするセル</span>
<span class="t" style="left:566.8px;top:310.0px;color:#000;font-size:12.5px;transform:scaleX(1.206);">(<u>L</u>):</span>
<span class="t" style="left:601.4px;top:309.6px;color:#000;font-size:13px;transform:scaleX(0.976);">Reference!$A$5</span>
<span class="t" style="left:521.7px;top:372.5px;color:#000;font-size:12.5px;transform:scaleX(1.050);">3-D</span>
<span class="t" style="left:546.5px;top:372.5px;color:#000;font-size:13px;transform:scaleX(0.900);">表示</span>
<span class="t" style="left:568.9px;top:372.5px;color:#000;font-size:12.5px;transform:scaleX(1.186);">(<u>3</u>)</span>
<span class="t" style="left:830.4px;top:578.5px;color:#000;font-size:12.5px;transform:scaleX(0.911);">OK</span>
<span class="t" style="left:898.3px;top:578.5px;color:#000;font-size:13px;transform:scaleX(0.746);">キャンセル</span>
<span class="t" style="left:114.2px;top:609.5px;color:#333;font-size:13.5px;transform:scaleX(1.037);">Survey</span>
<span class="t" style="left:186.3px;top:609.5px;color:#217346;font-size:13.5px;transform:scaleX(1.054);">Reference</span>
<span class="t" style="left:9.5px;top:634.7px;color:#555;font-size:13px;transform:scaleX(0.892);">参照</span>
<span class="t" style="left:944.0px;top:634.7px;color:#a0a0a0;font-size:12.5px;">100%</span>
<svg style="left:854px;top:588px" width="14" height="22" viewBox="0 0 14 22"><path d="M1 1V17L5 13.5L7.8 20L10.3 19L7.5 12.6H12.5Z" fill="#fff" stroke="#000" stroke-width="1" stroke-linejoin="miter"/></svg>

</body></html>
